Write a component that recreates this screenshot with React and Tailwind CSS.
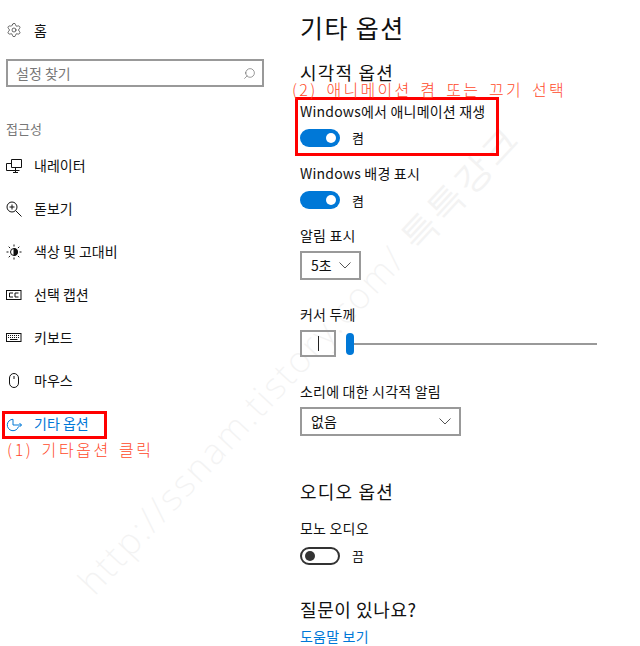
import { Search, Settings } from "lucide-react";

const kr = "font-['Noto_Sans_CJK_KR','Noto_Sans',sans-serif]";

function NarratorIcon() {
  return (
    <svg width="16" height="16" viewBox="0 0 16 16" fill="none" stroke="#111" strokeWidth="1">
      <path d="M5.500 1.500h10v8h-10z" />
      <path d="M5 5.500H.5v7h13" />
      <path d="M9.500 9.500v5M7 14.500h5" />
    </svg>
  );
}

function ZoomIcon() {
  return (
    <svg width="16" height="16" viewBox="0 0 16 16" fill="none" stroke="#111" strokeWidth="1">
      <circle cx="6" cy="6" r="5" />
      <path d="M6 3.500v5M3.500 6h5M9.800 9.800l5.700 5.700" />
    </svg>
  );
}

function ContrastIcon() {
  return (
    <svg width="16" height="16" viewBox="0 0 16 16" fill="none" stroke="#111" strokeWidth="1">
      <circle cx="8" cy="8" r="3.500" />
      <path d="M8 4.500a3.500 3.500 0 0 1 0 7z" fill="#111" />
      <path d="M8 .5v2M8 13.500v2M.5 8h2M13.500 8h2M2.700 2.700l1.400 1.400M11.900 11.900l1.400 1.400M2.700 13.300l1.400-1.400M11.900 4.100l1.400-1.400" />
    </svg>
  );
}

function CaptionIcon() {
  return (
    <svg width="16" height="16" viewBox="0 0 16 16" fill="none" stroke="#111" strokeWidth="1">
      <rect x=".5" y="3.500" width="14.500" height="9" />
      <path d="M7 6H3.500v4H7M12.500 6H9v4h3.500" />
    </svg>
  );
}

function KeyboardIcon() {
  return (
    <svg width="16" height="16" viewBox="0 0 16 16" fill="none" stroke="#111" strokeWidth="1">
      <rect x=".5" y="3.500" width="14.500" height="8" />
      <path d="M2 5.500h11.500M2 7.500h11.500" strokeDasharray="1 1" />
      <path d="M4 9.500h7.500" />
    </svg>
  );
}

function MouseIcon() {
  return (
    <svg width="16" height="16" viewBox="0 0 16 16" fill="none" stroke="#111" strokeWidth="1">
      <rect x="3.500" y=".5" width="9" height="14" rx="4.500" />
      <path d="M8 3v3" />
    </svg>
  );
}

function OtherIcon() {
  return (
    <svg width="16" height="16" viewBox="0 0 16 16" fill="none" stroke="#0078d7" strokeWidth="1">
      <path d="M12.500 10.500A5.700 5.700 0 1 1 7 3.300" />
      <path d="M7 3.300V9h8.500M13.500 7l2 2-2 2" />
    </svg>
  );
}

function Chevron() {
  return (
    <svg width="12" height="7" viewBox="0 0 12 7" fill="none" stroke="#555" strokeWidth="1">
      <path d="M.5.500 6 6l5.500-5.500" />
    </svg>
  );
}

function NavItem({ icon, label, active }) {
  return (
    <div className={`flex h-[43px] items-center gap-3 pl-1.5 text-[14px] ${active ? "text-[#0078d7]" : "text-[#111]"}`}>
      <span className="w-4">{icon}</span>
      <span>{label}</span>
    </div>
  );
}

function Toggle({ on, label }) {
  return (
    <div className="flex items-center gap-3 text-[13px] text-[#111]">
      {on ? (
        <span className="flex h-[18px] w-10 items-center justify-end rounded-full bg-[#0078d7] pr-[4px]">
          <span className="size-[10px] rounded-full bg-white" />
        </span>
      ) : (
        <span className="flex h-[18px] w-10 items-center rounded-full border-2 border-[#333] pl-[3px]">
          <span className="size-[10px] rounded-full bg-[#333]" />
        </span>
      )}
      <span>{label}</span>
    </div>
  );
}

export default function App() {
  return (
    <div className={`relative flex h-[646px] w-[640px] overflow-hidden bg-white ${kr}`}>
      {/* watermark, sits under the page */}
      <div className="pointer-events-none absolute left-[85px] top-[570px] origin-left -rotate-[47deg] whitespace-nowrap text-[36px] font-extralight leading-none tracking-[2.5px] text-[#f3f3f3] font-['Noto_Sans',sans-serif]">
        http://ssnam.tistory.com/ 특특강크
      </div>

      {/* sidebar */}
      <aside className="relative w-[300px] shrink-0">
        <div className="mt-[19px] flex h-[22px] items-center gap-3 pl-1.5 text-[14px] text-[#111]">
          <span className="w-4"><Settings size={16} strokeWidth={1} className="text-[#222]" /></span>
          <span>홈</span>
        </div>
        <div className="mt-[18px] ml-1.5 flex h-[28px] w-[258px] items-center justify-between border-2 border-[#999] pl-2 pr-1.5 text-[14px] text-[#777]">
          <span>설정 찾기</span>
          <Search size={13} strokeWidth={1} className="-scale-x-100 text-[#444]" />
        </div>
        <div className="mt-[32px] pl-1.5 text-[13px] leading-5 text-[#777]">접근성</div>
        <div className="mt-[5px]">
          <NavItem icon={<NarratorIcon />} label="내레이터" />
          <NavItem icon={<ZoomIcon />} label="돋보기" />
          <NavItem icon={<ContrastIcon />} label="색상 및 고대비" />
          <NavItem icon={<CaptionIcon />} label="선택 캡션" />
          <NavItem icon={<KeyboardIcon />} label="키보드" />
          <NavItem icon={<MouseIcon />} label="마우스" />
          <NavItem icon={<OtherIcon />} label="기타 옵션" active />
        </div>
      </aside>

      {/* main */}
      <main className="relative flex-1 text-[#111]">
        <h1 className="mt-[9px] text-[25px] leading-9 tracking-[1.4px]">기타 옵션</h1>
        <h2 className="mt-[14px] text-[18px] leading-[26px] tracking-[1.2px]">시각적 옵션</h2>
        <p className="mt-[16px] text-[14px] leading-5 tracking-[.2px]">Windows에서 애니메이션 재생</p>
        <div className="mt-[7px]"><Toggle on label="켬" /></div>
        <p className="mt-[15px] text-[14px] leading-5 tracking-[.2px]">Windows 배경 표시</p>
        <div className="mt-[8px]"><Toggle on label="켬" /></div>
        <p className="mt-[15px] text-[14px] leading-5 tracking-[.2px]">알림 표시</p>
        <div className="mt-[6px] flex h-[29px] w-[61px] items-center justify-between border-2 border-[#999] pl-[9px] pr-2 text-[14px]">
          <span>5초</span>
          <Chevron />
        </div>
        <p className="mt-[24px] text-[14px] leading-5 tracking-[.2px]">커서 두께</p>
        <div className="mt-[6px] flex items-center">
          <div className="flex h-[27px] w-[36px] items-center justify-center border-2 border-[#999]">
            <span className="h-[15px] w-px bg-[#222]" />
          </div>
          <span className="ml-[10px] h-[22px] w-2 rounded-full bg-[#0078d7]" />
          <span className="h-[2px] w-[243px] bg-[#999]" />
        </div>
        <p className="mt-[24px] text-[14px] leading-5 tracking-[.2px]">소리에 대한 시각적 알림</p>
        <div className="mt-[6px] flex h-[29px] w-[161px] items-center justify-between border-2 border-[#999] pl-[9px] pr-2 text-[14px]">
          <span>없음</span>
          <Chevron />
        </div>
        <h2 className="mt-[42px] text-[18px] leading-[26px] tracking-[1.2px]">오디오 옵션</h2>
        <p className="mt-[14px] text-[14px] leading-5 tracking-[.2px]">모노 오디오</p>
        <div className="mt-[8px]"><Toggle label="끔" /></div>
        <h2 className="mt-[30px] text-[18px] leading-[26px] tracking-[.6px]">질문이 있나요?</h2>
        <a className="mt-[4px] block text-[14px] leading-5 tracking-[.2px] text-[#0078d7]">도움말 보기</a>
      </main>

      {/* annotations on top of the capture */}
      <div className="absolute left-[2px] top-[411px] h-[28px] w-[105px] border-[3px] border-[#ff0000]" />
      <div className="absolute left-[7px] top-[439px] text-[16px] font-light leading-5 tracking-[2.6px] text-[#ff4a2a] [word-spacing:2px]">(1) 기타옵션 클릭</div>
      <div className="absolute left-[295px] top-[97px] h-[59px] w-[204px] border-[3px] border-[#ff0000]" />
      <div className="absolute left-[292px] top-[79px] text-[16px] font-light leading-5 tracking-[2.3px] text-[#ff4a2a] [word-spacing:3px]">(2) 애니메이션 켬 또는 끄기 선택</div>
    </div>
  );
}
